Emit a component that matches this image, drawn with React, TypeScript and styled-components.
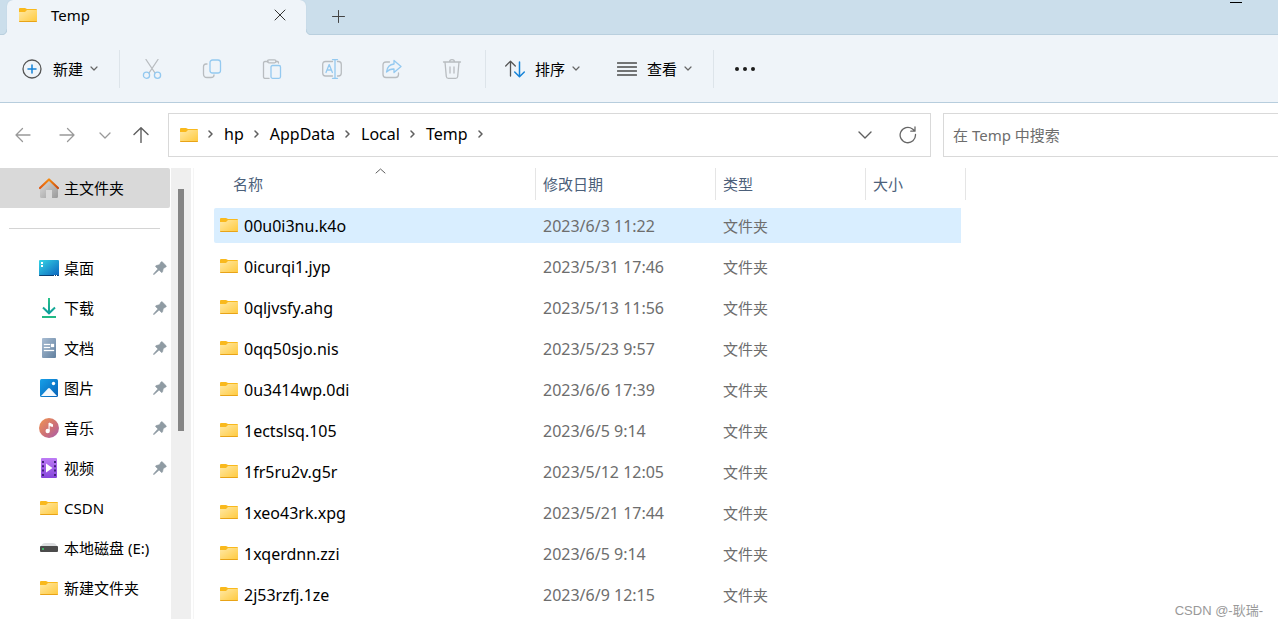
import React from "react";
import styled, { createGlobalStyle, css } from "styled-components";

const Global = createGlobalStyle`
  * { box-sizing: border-box; }
  body {
    margin: 0;
    background: #fff;
    color: #000;
    font-family: "Noto Sans", "Noto Sans CJK SC", sans-serif;
    font-size: 15px;
    line-height: 20px;
    overflow-x: hidden;
  }
  button, input { font: inherit; color: inherit; }
  button { border: 0; padding: 0; background: none; cursor: default; }
  svg { display: block; flex: none; }
`;

const Window = styled.div`
  position: relative;
  display: flex;
  flex-direction: column;
  min-height: 100vh;
`;

const TabBar = styled.header`
  display: flex;
  height: 35px;
  padding-left: 7px;
  background: #cbdeeb;
  border-bottom: 1px solid #b9cfde;
`;

const Tab = styled.div`
  position: relative;
  display: flex;
  align-items: center;
  width: 299px;
  height: 35px;
  padding: 0 20px 5px 12px;
  background: #eff4f9;
  border-radius: 6px 6px 0 0;
  box-shadow: 0 0 1px #a9c2d4;
  clip-path: inset(0 -7px 0 -7px);

  &::before,
  &::after {
    content: "";
    position: absolute;
    bottom: 0;
    width: 6px;
    height: 6px;
  }
  &::before {
    left: -6px;
    background: radial-gradient(circle at 0 0, transparent 5px, #b9cfde 6px, #eff4f9 7px);
  }
  &::after {
    right: -6px;
    background: radial-gradient(circle at 100% 0, transparent 5px, #b9cfde 6px, #eff4f9 7px);
  }
`;

const TabTitle = styled.span`
  flex: 1;
  margin-left: 14px;
`;

const NewTab = styled.button`
  display: flex;
  align-items: center;
  justify-content: center;
  width: 64px;
  height: 32px;
`;

const WindowControls = styled.div`
  margin-left: auto;
  padding: 2px 36px 0 0;
`;

const Minimise = styled.button`
  display: block;
  width: 12px;
  height: 1px;
  background: #000;
`;

const Toolbar = styled.nav`
  display: flex;
  align-items: center;
  height: 68px;
  padding-left: 22px;
  background: #eff4f9;
  border-bottom: 1px solid #b7cddd;
`;

const MenuButton = styled.button<{ $gap: number }>`
  display: flex;
  align-items: center;
  gap: ${(p) => p.$gap}px;
  height: 40px;

  svg:last-child { margin-left: ${(p) => 7 - p.$gap}px; }
`;

const IconButton = styled.button`
  display: flex;
  align-items: center;
  justify-content: center;
  width: 60px;
  height: 40px;
`;

const Rule = styled.span<{ $before: number; $after: number }>`
  width: 1px;
  height: 38px;
  margin: 0 ${(p) => p.$after}px 0 ${(p) => p.$before}px;
  background: #dde4ea;
`;

const Spacer = styled.span`
  width: 37px;
`;

const AddressRow = styled.div`
  display: flex;
  align-items: center;
  height: 65px;
  padding-bottom: 1px;
`;

const NavButtons = styled.div`
  display: flex;
  align-items: center;
  width: 168px;
  padding-left: 1px;
`;

const NavButton = styled.button<{ $width: number }>`
  display: flex;
  justify-content: center;
  width: ${(p) => p.$width}px;
  height: 32px;
  align-items: center;
`;

const AddressBox = styled.div`
  display: flex;
  flex: 1;
  align-items: center;
  height: 44px;
  padding: 0 13px 0 11px;
  border: 1px solid #d9d9d9;
`;

const Crumbs = styled.ol`
  display: flex;
  flex: 1;
  align-items: center;
  margin: 0;
  padding: 0 0 2px;
  font-size: 16px;
  list-style: none;
`;

const Crumb = styled.li`
  display: flex;
  align-items: center;

  svg { margin: 0 10px; }
`;

const CrumbLink = styled.a`
  color: #000;
  text-decoration: none;
`;

const AddressAction = styled.button`
  display: flex;
  align-items: center;
  margin-left: 27px;
`;

const SearchInput = styled.input`
  width: 335px;
  height: 44px;
  margin-left: 12px;
  padding: 0 9px;
  background: #fff;
  border: 1px solid #d9d9d9;
  border-right: 0;
  border-radius: 0;
  outline: 0;

  &::placeholder { color: #6d6d6d; opacity: 1; }
`;

const Body = styled.div`
  display: flex;
  flex: 1;
  margin-bottom: 8px;
`;

const Sidebar = styled.aside`
  width: 171px;
`;

const SideLink = styled.a<{ $active?: boolean }>`
  display: flex;
  align-items: center;
  gap: 5px;
  height: 40px;
  margin-right: 1px;
  padding: 0 3px 0 39px;
  color: #000;
  text-decoration: none;
  ${(p) =>
    p.$active &&
    css`
      background: #d9d9d9;
      border-radius: 0 2px 2px 0;
    `}
`;

const SideLabel = styled.span`
  flex: 1;
  white-space: nowrap;
`;

const SideRule = styled.hr`
  height: 1px;
  margin: 20px 11px 19px 9px;
  border: 0;
  background: #d4d4d4;
`;

const ScrollTrack = styled.div`
  width: 20px;
  padding: 21px 7px 0;
  background: #efefef;
`;

const ScrollThumb = styled.div`
  width: 6px;
  height: 242px;
  background: #858585;
`;

const Listing = styled.main`
  flex: 1;
  margin-left: 2px;
  padding-left: 20px;
  border-left: 1px solid #f5f5f5;
`;

const Files = styled.table`
  width: 752px;
  margin-top: -6px;
  table-layout: fixed;
  border-spacing: 0 6px;
`;

const HeadCell = styled.th<{ $width: number }>`
  width: ${(p) => p.$width}px;
  height: 34px;
  padding: 0;
  vertical-align: top;
  font-weight: 400;
  text-align: left;
  color: #4c607a;
`;

const HeadLabel = styled.div<{ $inset: number }>`
  position: relative;
  height: 32px;
  padding: 6px 0 0 ${(p) => p.$inset}px;
  border-right: 1px solid #e5e5e5;
`;

const SortMark = styled.span`
  position: absolute;
  top: 0;
  left: 50%;
`;

const FileRow = styled.tr<{ $selected?: boolean }>`
  td { background-color: ${(p) => (p.$selected ? "#d9eeff" : "transparent")}; }
`;

const Cell = styled.td<{ $latin?: boolean }>`
  height: 35px;
  padding: 1px 0 0 7px;
  font-size: ${(p) => (p.$latin ? 16 : 15)}px;
  color: #6d6d6d;
  background-clip: padding-box;

  &:first-child {
    padding-left: 6px;
    border-radius: 2px 0 0 2px;
  }
  &:last-child { border-right: 5px solid transparent; }
`;

const FileName = styled.span`
  display: flex;
  align-items: center;
  gap: 6px;
  color: #000;

  svg { margin-bottom: 3px; }
`;

const Watermark = styled.footer`
  position: absolute;
  right: 15px;
  bottom: 6px;
  font: 13px/20px "Liberation Sans", "Noto Sans CJK SC", sans-serif;
  color: #999;
`;

const FolderIcon = () => (
  <svg width="18" height="14" viewBox="0 0 18 14">
    <defs>
      <linearGradient id="folder" x1="0" y1="0" x2="1" y2="1">
        <stop offset="0" stopColor="#ffe9a6" />
        <stop offset="1" stopColor="#ffc93c" />
      </linearGradient>
    </defs>
    <path d="M0 1Q0 0 1 0H6L8 1H17Q18 1 18 2V6H0Z" fill="#f9b91d" />
    <path d="M0 4H6L8 2H18V13Q18 14 17 14H1Q0 14 0 13Z" fill="url(#folder)" />
    <path d="M0 13H18Q18 14 17 14H1Q0 14 0 13Z" fill="#e8a317" />
  </svg>
);

type LineProps = { w: number; h: number; d: string; color?: string; stroke?: number };
const Line = ({ w, h, d, color = "#5f5f5f", stroke = 1 }: LineProps) => (
  <svg width={w} height={h} viewBox={`0 0 ${w} ${h}`} fill="none" stroke={color} strokeWidth={stroke} strokeLinecap="round" strokeLinejoin="round">
    <path d={d} />
  </svg>
);

const SmallChevron = () => <Line w={8} h={5} d="M1 1L4 4L7 1" color="#666" stroke={1.2} />;
const CrumbChevron = () => <Line w={6} h={8} d="M1 1L4 4L1 7" stroke={1.5} />;

const GREY = "#b8bcc0";
const BLUE = "#94c9f0";

const Art = ({ children, w = 20, h = 20 }: { children: React.ReactNode; w?: number; h?: number }) => (
  <svg width={w} height={h} viewBox={`0 0 ${w} ${h}`} fill="none" strokeWidth="1.3" strokeLinecap="round" strokeLinejoin="round">
    {children}
  </svg>
);

const NewIcon = () => (
  <Art>
    <circle cx="10" cy="10" r="9" stroke="#555" />
    <path d="M10 6V14M6 10H14" stroke="#1683d8" strokeWidth="1.500" />
  </Art>
);
const CutIcon = () => (
  <Art>
    <path d="M4 .5L13 14M16 .5L7 14" stroke={GREY} />
    <circle cx="4.500" cy="16.200" r="3.100" stroke={BLUE} />
    <circle cx="15.500" cy="16.200" r="3.100" stroke={BLUE} />
  </Art>
);
const CopyIcon = () => (
  <Art>
    <path d="M5 5H4Q1.500 5 1.500 7.500V15Q1.500 18.500 5 18.500H9Q12 18.500 12 16" stroke={GREY} />
    <rect x="8" y="1" width="10.500" height="13" rx="2.500" stroke={BLUE} />
  </Art>
);
const PasteIcon = () => (
  <Art>
    <path d="M6 2.500H3Q1.500 2.500 1.500 4V18Q1.500 19.400 3 19.400H7M14 2.500H15.500Q16.500 2.500 16.500 4" stroke={GREY} />
    <rect x="5.500" y=".8" width="8.500" height="3" rx="1.500" stroke={GREY} />
    <rect x="9" y="6.500" width="9.500" height="12.800" rx="1.500" stroke={BLUE} />
  </Art>
);
const RenameIcon = () => (
  <Art>
    <path d="M10.500 2.500H3.500Q.7 2.500 .7 5.500V14Q.7 17 3.500 17H10.500M15.500 2.500H16.500Q19.300 2.500 19.300 5.500V14Q19.300 17 16.500 17H15.500" stroke={GREY} />
    <path d="M4 13.500L7.200 5.500L10.400 13.500M5 11H9.400M13 1V19M10.500 .7H15.500M10.500 19.300H15.500" stroke={BLUE} />
  </Art>
);
const ShareIcon = () => (
  <Art>
    <path d="M7.500 3H4Q1 3 1 6V15.500Q1 18.500 4 18.500H13.500Q16.500 18.500 16.500 15.500V14" stroke={GREY} />
    <path d="M12 1.500L19 7.500L12 13.500V10Q7.500 9.800 4.500 13Q5.500 5.500 12 5Z" stroke={BLUE} />
  </Art>
);
const DeleteIcon = () => (
  <Art>
    <path d="M1.500 3H18.500M7.500 3Q7.500 .7 10 .7Q12.500 .7 12.500 3M3 3L4.300 17.500Q4.500 19.300 6.300 19.300H13.700Q15.500 19.300 15.700 17.500L17 3M8 8V14M12 8V14" stroke={GREY} />
  </Art>
);
const SortIcon = () => (
  <Art>
    <path d="M5.500 17V2.500M.7 7L5.500 2.200L10.300 7" stroke="#555" />
    <path d="M14.500 3V17.500M9.700 13L14.500 17.800L19.300 13" stroke="#1683d8" strokeWidth="1.500" />
  </Art>
);
const ViewIcon = () => (
  <Art>
    <path d="M.5 4H19.500M.5 8H19.500M.5 12H19.500M.5 16H19.500" stroke="#4a4a4a" />
  </Art>
);
const RefreshIcon = () => (
  <Art w={18} h={18}>
    <path d="M16.500 8.500A7.700 7.700 0 1 1 13.500 2.900L16 5M16 1V5.200H11.800" stroke="#666" />
  </Art>
);

const PinIcon = () => (
  <svg width="14" height="14" viewBox="0 0 14 14" fill="#8f9ba3">
    <path d="M8 1Q8.700 .3 9.400 1L13.100 4.700Q13.700 5.400 12.900 5.900L10.300 7.600L9.500 10.900Q9 11.900 8.200 11.200L6.100 9.100L1.300 13.300L.5 13.500L.7 12.700L4.900 7.900L2.800 5.800Q2.200 5 3.100 4.600L6.400 3.700Z" stroke="#8f9ba3" strokeWidth=".6" />
  </svg>
);

const HomeIcon = () => (
  <svg width="20" height="20" viewBox="0 0 20 20">
    <defs>
      <linearGradient id="wall" x1="0" y1="0" x2="1" y2="1"><stop stopColor="#dedede" /><stop offset="1" stopColor="#999" /></linearGradient>
      <linearGradient id="roof"><stop stopColor="#e05a13" /><stop offset=".5" stopColor="#f6890c" /><stop offset="1" stopColor="#c94b12" /></linearGradient>
    </defs>
    <path d="M1 9.500L10 1.500L19 9.500V18.500Q19 20 17.500 20H13V12H7V20H2.500Q1 20 1 18.500Z" fill="url(#wall)" />
    <path d="M1 10L10 1.500L19 10" fill="none" stroke="url(#roof)" strokeWidth="2.200" strokeLinecap="round" strokeLinejoin="round" />
  </svg>
);
const DesktopIcon = () => (
  <svg width="20" height="20" viewBox="0 0 20 20">
    <defs><linearGradient id="desk" x1="0" y1="0" x2="1" y2="1"><stop stopColor="#35d5e5" /><stop offset="1" stopColor="#0b63be" /></linearGradient></defs>
    <rect y="2" width="20" height="16" rx="1" fill="url(#desk)" />
    <path d="M0 17H20Q20 18 19 18H1Q0 18 0 17Z" fill="#083f73" />
    <path d="M2 4H4V6H2ZM2 7H4V9H2ZM15 17H16V18H15ZM17 17H18V18H17Z" fill="#fff" />
  </svg>
);
const DownloadIcon = () => (
  <svg width="20" height="20" viewBox="0 0 20 20" fill="none" strokeWidth="2">
    <defs><linearGradient id="down" x1="0" y1="0" x2="0" y2="1"><stop stopColor="#2bc48a" /><stop offset="1" stopColor="#0b9c9c" /></linearGradient></defs>
    <path d="M10 0V15M4 9.500L10 15.300L16 9.500" stroke="url(#down)" />
    <path d="M3 19H17" stroke="#22b985" />
  </svg>
);
const DocumentIcon = () => (
  <svg width="20" height="20" viewBox="0 0 20 20">
    <defs><linearGradient id="doc" x1="0" y1="0" x2="1" y2="1"><stop stopColor="#a9bdd3" /><stop offset="1" stopColor="#61809f" /></linearGradient></defs>
    <rect x="3" width="14" height="20" rx="1" fill="url(#doc)" />
    <path d="M5 6H11V7H5ZM5 9H11V10H5ZM12 6H15V9H12ZM5 12H15V13H5Z" fill="#fff" stroke="#fff" strokeWidth=".3" />
  </svg>
);
const PictureIcon = () => (
  <svg width="20" height="20" viewBox="0 0 20 20">
    <defs><linearGradient id="pic" x1="0" y1="0" x2="1" y2="1"><stop stopColor="#17a0e8" /><stop offset="1" stopColor="#0761b7" /></linearGradient></defs>
    <rect x="1" y="1" width="18" height="18" rx="1.500" fill="url(#pic)" />
    <path d="M2 18L9 10.500Q10 9.500 11 10.500L18 18Z" fill="#f3f8fd" />
    <circle cx="14.500" cy="5.500" r="1.700" fill="#fff" />
  </svg>
);
const MusicIcon = () => (
  <svg width="20" height="20" viewBox="0 0 20 20">
    <defs><linearGradient id="music" x1="0" y1="0" x2="1" y2="1"><stop stopColor="#f2954f" /><stop offset=".6" stopColor="#ca6e7b" /><stop offset="1" stopColor="#a65cb0" /></linearGradient></defs>
    <circle cx="10" cy="10" r="10" fill="url(#music)" />
    <circle cx="8.700" cy="13" r="2.200" fill="#fff" />
    <path d="M10 13V5L13.500 6.500V8.500L10.500 7.500" fill="#fff" stroke="#fff" />
  </svg>
);
const VideoIcon = () => (
  <svg width="20" height="20" viewBox="0 0 20 20">
    <defs><linearGradient id="video" x1="0" y1="0" x2="0" y2="1"><stop stopColor="#bd7bf5" /><stop offset="1" stopColor="#8646db" /></linearGradient></defs>
    <rect x="2" width="16" height="20" rx="1" fill="url(#video)" />
    <path d="M4 3V18M16 3V18" stroke="#43207c" strokeWidth="2" strokeDasharray="2 2.300" />
    <path d="M7 5.500L13.500 10L7 14.500Z" fill="#fff" />
  </svg>
);
const DriveIcon = () => (
  <svg width="20" height="20" viewBox="0 0 20 20">
    <path d="M1 9L4 5.500Q5 5 6 5H14Q15 5 16 5.500L19 9Z" fill="#dcdee0" />
    <rect x="1" y="8" width="18" height="6" rx="1" fill="#4b4b4b" />
    <circle cx="4" cy="11" r=".9" fill="#35e06d" />
  </svg>
);
const SideFolder = styled.span`
  display: flex;
  width: 20px;
  justify-content: center;
`;

const places = [
  { label: "桌面", icon: <DesktopIcon />, pinned: true },
  { label: "下载", icon: <DownloadIcon />, pinned: true },
  { label: "文档", icon: <DocumentIcon />, pinned: true },
  { label: "图片", icon: <PictureIcon />, pinned: true },
  { label: "音乐", icon: <MusicIcon />, pinned: true },
  { label: "视频", icon: <VideoIcon />, pinned: true },
  { label: "CSDN", icon: <SideFolder><FolderIcon /></SideFolder> },
  { label: "本地磁盘 (E:)", icon: <DriveIcon /> },
  { label: "新建文件夹", icon: <SideFolder><FolderIcon /></SideFolder> },
];

const files = [
  ["00u0i3nu.k4o", "2023/6/3 11:22"],
  ["0icurqi1.jyp", "2023/5/31 17:46"],
  ["0qljvsfy.ahg", "2023/5/13 11:56"],
  ["0qq50sjo.nis", "2023/5/23 9:57"],
  ["0u3414wp.0di", "2023/6/6 17:39"],
  ["1ectslsq.105", "2023/6/5 9:14"],
  ["1fr5ru2v.g5r", "2023/5/12 12:05"],
  ["1xeo43rk.xpg", "2023/5/21 17:44"],
  ["1xqerdnn.zzi", "2023/6/5 9:14"],
  ["2j53rzfj.1ze", "2023/6/9 12:15"],
];

const columns = [
  { label: "名称", width: 322, inset: 19, sorted: true },
  { label: "修改日期", width: 180, inset: 7 },
  { label: "类型", width: 150, inset: 7 },
  { label: "大小", width: 100, inset: 7 },
];

const edits = [
  { label: "剪切", icon: <CutIcon /> },
  { label: "复制", icon: <CopyIcon /> },
  { label: "粘贴", icon: <PasteIcon /> },
  { label: "重命名", icon: <RenameIcon /> },
  { label: "共享", icon: <ShareIcon /> },
  { label: "删除", icon: <DeleteIcon /> },
];

export default function App() {
  return (
    <Window>
      <Global />
      <TabBar>
        <Tab>
          <FolderIcon />
          <TabTitle>Temp</TabTitle>
          <button aria-label="关闭标签页"><Line w={12} h={12} d="M1 1L11 11M11 1L1 11" color="#333" /></button>
        </Tab>
        <NewTab aria-label="新建标签页"><Line w={13} h={13} d="M6.500 .5V12.500M.5 6.500H12.500" color="#444" /></NewTab>
        <WindowControls><Minimise aria-label="最小化" /></WindowControls>
      </TabBar>

      <Toolbar>
        <MenuButton $gap={11}><NewIcon />新建<SmallChevron /></MenuButton>
        <Rule $before={21} $after={2} />
        {edits.map((e) => (
          <IconButton key={e.label} aria-label={e.label}>{e.icon}</IconButton>
        ))}
        <Rule $before={3} $after={19} />
        <MenuButton $gap={10}><SortIcon />排序<SmallChevron /></MenuButton>
        <Spacer />
        <MenuButton $gap={10}><ViewIcon />查看<SmallChevron /></MenuButton>
        <Rule $before={21} $after={1} />
        <IconButton aria-label="更多">
          <svg width="20" height="4" viewBox="0 0 20 4" fill="#1c1c1c">
            <circle cx="2" cy="2" r="2" /><circle cx="10" cy="2" r="2" /><circle cx="18" cy="2" r="2" />
          </svg>
        </IconButton>
      </Toolbar>

      <AddressRow>
        <NavButtons>
          <NavButton aria-label="后退" $width={44}><Line w={16} h={16} d="M15 8H1M7.500 1.500L1 8L7.500 14.500" color="#999" stroke={1.3} /></NavButton>
          <NavButton aria-label="前进" $width={44}><Line w={16} h={16} d="M1 8H15M8.500 1.500L15 8L8.500 14.500" color="#999" stroke={1.3} /></NavButton>
          <NavButton aria-label="最近位置" $width={32}><Line w={12} h={7} d="M1 1L6 6L11 1" color="#999" stroke={1.3} /></NavButton>
          <NavButton aria-label="向上" $width={40}><Line w={16} h={16} d="M8 15.500V1M1 7.500L8 .7L15 7.500" stroke={1.4} /></NavButton>
        </NavButtons>
        <AddressBox>
          <FolderIcon />
          <Crumbs>
            <Crumb><CrumbChevron /></Crumb>
            {["hp", "AppData", "Local", "Temp"].map((name) => (
              <Crumb key={name}><CrumbLink href="#">{name}</CrumbLink><CrumbChevron /></Crumb>
            ))}
          </Crumbs>
          <AddressAction aria-label="历史记录"><Line w={14} h={8} d="M1 1L7 7L13 1" stroke={1.4} /></AddressAction>
          <AddressAction aria-label="刷新"><RefreshIcon /></AddressAction>
        </AddressBox>
        <SearchInput type="text" aria-label="搜索" placeholder="在 Temp 中搜索" />
      </AddressRow>

      <Body>
        <Sidebar>
          <SideLink href="#" $active><HomeIcon /><SideLabel>主文件夹</SideLabel></SideLink>
          <SideRule />
          {places.map((p) => (
            <SideLink key={p.label} href="#">
              {p.icon}
              <SideLabel>{p.label}</SideLabel>
              {p.pinned && <PinIcon />}
            </SideLink>
          ))}
        </Sidebar>
        <ScrollTrack><ScrollThumb /></ScrollTrack>
        <Listing>
          <Files>
            <thead>
              <tr>
                {columns.map((c) => (
                  <HeadCell key={c.label} $width={c.width} scope="col">
                    <HeadLabel $inset={c.inset}>
                      {c.label}
                      {c.sorted && <SortMark><Line w={11} h={6} d="M1 5L5.500 1L10 5" /></SortMark>}
                    </HeadLabel>
                  </HeadCell>
                ))}
              </tr>
            </thead>
            <tbody>
              {files.map(([name, date], i) => (
                <FileRow key={name} $selected={i === 0}>
                  <Cell $latin><FileName><FolderIcon />{name}</FileName></Cell>
                  <Cell $latin>{date}</Cell>
                  <Cell>文件夹</Cell>
                  <Cell />
                </FileRow>
              ))}
            </tbody>
          </Files>
        </Listing>
      </Body>
      <Watermark>CSDN @-耿瑞-</Watermark>
    </Window>
  );
}
